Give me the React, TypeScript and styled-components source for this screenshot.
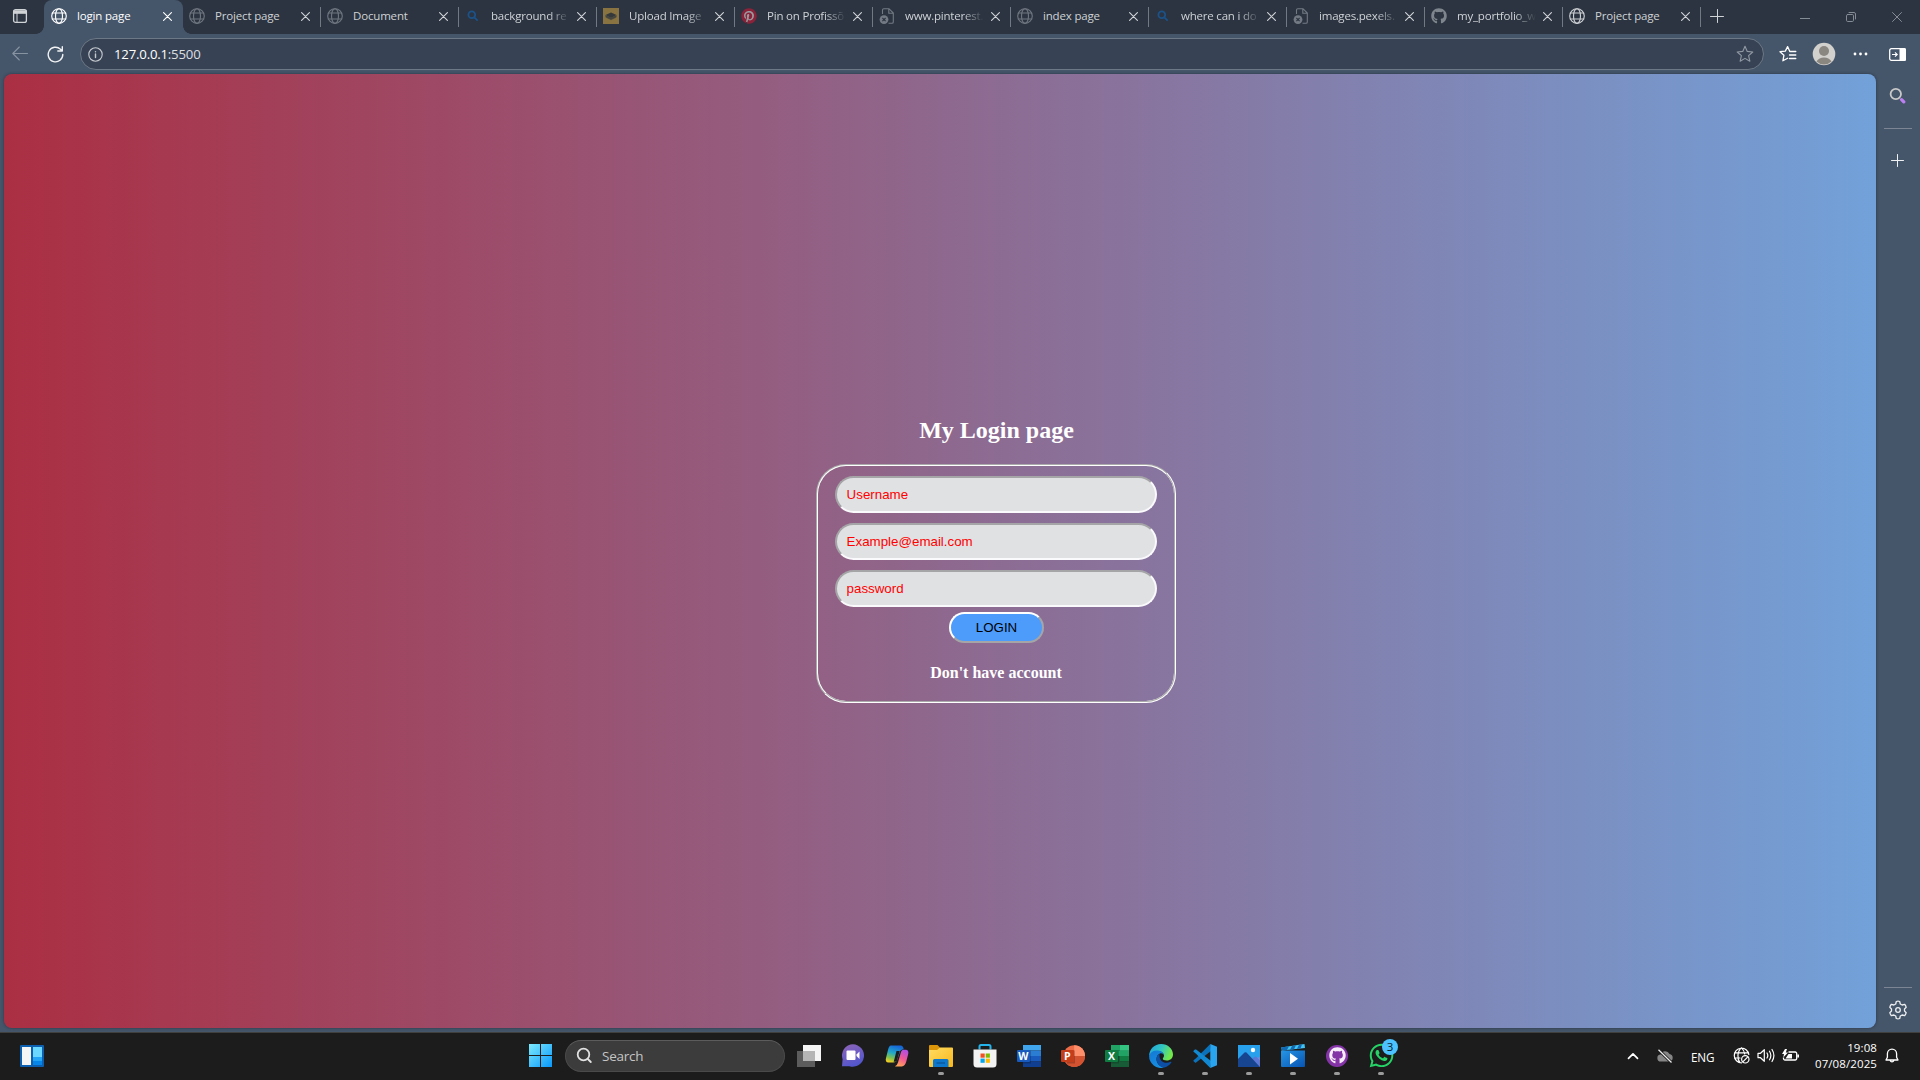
import React from "react";
import styled, { createGlobalStyle, css } from "styled-components";
import { FaGithub, FaPinterest, FaWhatsapp } from "react-icons/fa";

const GlobalStyle = createGlobalStyle`
  * { box-sizing: border-box; }
  html, body { margin: 0; padding: 0; background: #1c1c1c; overflow: hidden; }
  svg { display: block; flex: none; }
`;

const ui = `"Open Sans", "Noto Sans", sans-serif`;

const Screen = styled.div`
  width: 1920px;
  height: 1080px;
  display: grid;
  grid-template-rows: 34px 40px 958px 48px;
  background: #45556a;
  font-family: ${ui};
  overflow: hidden;
`;

/* ---------- tab strip ---------- */
const TabStrip = styled.div`
  display: flex;
  background: #2b3440;
`;
const TabActions = styled.div`
  width: 44px;
  padding: 8px 0 0 12px;
`;
const Tab = styled.div<{ $active?: boolean; $divider?: boolean }>`
  position: relative;
  width: 138px;
  height: 34px;
  display: flex;
  align-items: center;
  padding: 0 9px 2px 7px;
  color: ${(p) => (p.$active ? "#ffffff" : "#cfd2d6")};
  ${(p) =>
    p.$active &&
    css`
      width: 139px;
      margin-right: -1px;
      background: #45556a;
      border-radius: 8px 8px 0 0;
      &::before,
      &::after {
        content: "";
        position: absolute;
        bottom: 0;
        width: 8px;
        height: 8px;
      }
      &::before {
        left: -8px;
        background: radial-gradient(circle at 0 0, transparent 7.5px, #45556a 8px);
      }
      &::after {
        right: -8px;
        background: radial-gradient(circle at 100% 0, transparent 7.5px, #45556a 8px);
      }
    `}
  ${(p) =>
    p.$divider &&
    css`
      &::after {
        content: "";
        position: absolute;
        right: -1px;
        top: 7px;
        width: 1px;
        height: 20px;
        background: #717984;
      }
    `}
`;
const TabIcon = styled.span`
  width: 16px;
  height: 16px;
  display: flex;
  align-items: center;
  justify-content: center;
`;
const TabTitle = styled.span<{ $fade?: boolean }>`
  margin-left: 10px;
  width: 80px;
  margin-right: 6px;
  font-size: 11.5px;
  line-height: 16px;
  letter-spacing: -0.17px;
  white-space: nowrap;
  ${(p) =>
    p.$fade &&
    css`
      letter-spacing: -0.2px;
      mask-image: linear-gradient(to right, #000 58px, transparent 79px);
    `}
`;
const NewTab = styled.div`
  padding: 9px 0 0 10px;
`;
const WindowButtons = styled.div`
  margin-left: auto;
  display: flex;
  align-items: center;
  gap: 36px;
  padding: 0 18px 0 0;
  color: #858c95;
`;

/* ---------- toolbar ---------- */
const Toolbar = styled.div`
  display: flex;
  align-items: center;
  padding-left: 12px;
`;
const NavIcons = styled.div`
  display: flex;
  gap: 19px;
  width: 68px;
`;
const AddressBar = styled.div`
  width: 1684px;
  height: 32px;
  border: 1px solid #6c7885;
  border-radius: 16px;
  background: #374354;
  display: flex;
  align-items: center;
  padding: 0 9px 0 7px;
`;
const Address = styled.span`
  margin-left: 11px;
  flex: 1;
  color: #ffffff;
  font-size: 13.2px;
  line-height: 20px;
  letter-spacing: -0.2px;
  b {
    font-weight: 400;
    color: #dcdfe2;
  }
`;
const ToolbarRight = styled.div`
  display: flex;
  align-items: center;
  margin-left: 15px;
`;
const Gap = styled.span<{ $w: number }>`
  width: ${(p) => p.$w}px;
`;

/* ---------- content ---------- */
const Main = styled.div`
  display: grid;
  grid-template-columns: 1872px 44px;
  padding: 0 0 4px 4px;
`;
const Page = styled.main`
  height: 954px;
  border-radius: 8px;
  padding: 342px 0 0 812px;
  background: linear-gradient(to right, #ab2f43, #72a1d9);
  box-shadow: 0 0 3px rgba(20, 28, 40, 0.55);
`;
const LoginColumn = styled.div`
  width: 360px;
  font-family: "Liberation Serif", "Times New Roman", serif;
  color: #fff;
`;
const Heading = styled.h1`
  margin: 0 0 20px;
  padding-left: 1px;
  text-align: center;
  font-size: 24px;
  line-height: 28px;
  font-weight: 700;
`;
const LoginBox = styled.form`
  height: 239px;
  border: 2px groove #ffffff;
  border-radius: 30px;
  padding: 10px 17px 0;
  display: flex;
  flex-direction: column;
  align-items: center;
`;
const Field = styled.input`
  width: 322px;
  height: 37px;
  margin: 0 0 10px;
  padding: 0 9.6px;
  border: 2px solid;
  border-color: #a5a5a7 #fafafc #fafafc #a5a5a7;
  border-radius: 20px;
  background: #e0e1e3;
  font-family: "Liberation Sans", Arial, sans-serif;
  font-size: 13.333px;
  &::placeholder {
    color: #ff0000;
    opacity: 1;
  }
`;
const LoginButton = styled.button`
  width: 95px;
  height: 31px;
  margin-top: -5px;
  padding: 0 0 1px 1px;
  border: 2px solid;
  border-color: #ffffff #a5a5a7 #a5a5a7 #ffffff;
  border-radius: 20px;
  background: #4d9bfa;
  color: #000;
  font-family: "Liberation Sans", Arial, sans-serif;
  font-size: 13.333px;
`;
const SignupNote = styled.p`
  margin: 21px 0 0;
  font-size: 16px;
  line-height: 18px;
  font-weight: 700;
`;

const Sidebar = styled.aside`
  display: flex;
  flex-direction: column;
  align-items: center;
  padding: 13px 0 8px;
`;
const SideRule = styled.hr`
  width: 28px;
  height: 1px;
  margin: 0;
  border: 0;
  background: #7b8593;
`;
const Spacer = styled.div<{ $h?: number }>`
  ${(p) => (p.$h ? `height: ${p.$h}px;` : "flex: 1;")}
`;

/* ---------- taskbar ---------- */
const Taskbar = styled.footer`
  display: flex;
  align-items: center;
  padding-bottom: 2px;
  border-top: 1px solid #40413f;
  background: #1c1c1c;
  color: #fff;
`;
const Widgets = styled.div`
  width: 508px;
  padding-left: 20px;
`;
const StartButton = styled.div`
  width: 57px;
  padding-left: 21px;
`;
const SearchBox = styled.div`
  width: 220px;
  height: 32px;
  margin-right: 2px;
  border: 1px solid #4a4a4a;
  border-top-color: #5c5c5c;
  border-radius: 16px;
  background: #3c3c3c;
  display: flex;
  align-items: center;
  gap: 9px;
  padding-left: 10px;
  color: #c4c4c4;
  font-size: 13.5px;
  letter-spacing: -0.25px;
`;
const AppSlot = styled.div<{ $running?: boolean }>`
  position: relative;
  width: 44px;
  height: 45px;
  display: flex;
  align-items: center;
  justify-content: center;
  ${(p) =>
    p.$running &&
    css`
      &::after {
        content: "";
        position: absolute;
        left: 19px;
        bottom: 3px;
        width: 6px;
        height: 3px;
        border-radius: 1.5px;
        background: #9b9b9b;
      }
    `}
`;
const GithubDisc = styled.span`
  width: 22px;
  height: 22px;
  border-radius: 50%;
  background: #8534a8;
  display: flex;
  align-items: center;
  justify-content: center;
`;
const Badge = styled.span`
  position: absolute;
  left: 23px;
  top: 6px;
  width: 16px;
  height: 16px;
  border-radius: 50%;
  background: #4cc2ff;
  color: #06202c;
  font-size: 11.5px;
  line-height: 16px;
  text-align: center;
`;
const Tray = styled.div`
  margin-left: auto;
  display: flex;
  align-items: center;
  padding-right: 21px;
`;
const Language = styled.span`
  width: 24px;
  margin: 2px 18px 0 18px;
  font-size: 11.7px;
  letter-spacing: -0.2px;
`;
const Clock = styled.div`
  width: 72px;
  margin: 0 8px 0 6px;
  font-size: 11.5px;
  line-height: 16px;
  letter-spacing: 0.1px;
  text-align: right;
  white-space: nowrap;
`;

/* ---------- icons ---------- */
const line = { fill: "none", stroke: "currentColor", strokeLinecap: "round" as const, strokeLinejoin: "round" as const };

const Globe = ({ color = "#fff" }) => (
  <svg width="16" height="16" viewBox="0 0 16 16" color={color} {...line} strokeWidth="1.15">
    <circle cx="8" cy="8" r="7.3" />
    <ellipse cx="8" cy="8" rx="3.5" ry="7.3" />
    <path d="M1.3 5h13.4M1.3 11h13.4" />
  </svg>
);
const Magnifier = () => (
  <svg width="12" height="12" viewBox="0 0 12 12" fill="none" stroke="#1c5288" strokeWidth="1.8">
    <circle cx="4.8" cy="4.8" r="3.4" />
    <path d="M7.3 7.3l3.4 3.4" />
  </svg>
);
const StackTile = () => (
  <svg width="16" height="16" viewBox="0 0 16 16">
    <path fill="#897340" d="M0 0h16v16H0z" />
    <path fill="#5c5641" d="M2.500 9.500l5.500-2.700 5.500 2.700L8 12.200z" />
    <path fill="#35393c" d="M2.500 7L8 4.500 13.500 7 8 9.700z" />
    <path fill="#454640" d="M2.500 7L8 9.700 13.500 7v2L8 11.600 2.500 9z" />
  </svg>
);
const BrokenPage = () => (
  <svg width="16" height="16" viewBox="0 0 16 16">
    <path d="M3.5 6V2a1.3 1.3 0 0 1 1.3-1.3H10L14.3 5v9a1.3 1.3 0 0 1-1.3 1.3H9.5M9.8 1v4.2h4.4" fill="none" stroke="#737a84" strokeWidth="1.1" />
    <circle cx="5" cy="11.6" r="4.4" fill="#737a84" />
    <path d="M3.4 10l3.2 3.2M6.6 10l-3.2 3.2" stroke="#2b3440" strokeWidth="1.1" />
  </svg>
);
const PinterestMark = styled(FaPinterest)`
  color: #8a2239;
  background: radial-gradient(circle, #9a9a9e 6.5px, transparent 7px);
`;
const Close = () => (
  <svg width="9" height="9" viewBox="0 0 9 9" {...line} strokeWidth="1.15">
    <path d="M.6.6l7.8 7.8M8.4.6L.6 8.4" />
  </svg>
);
const star = "M8 1.2l2 4.5 4.9.5-3.7 3.3 1.1 4.9L8 11.9l-4.3 2.5 1.1-4.9L1.1 6.2 6 5.7z";

const iconSet: Record<string, React.ReactNode> = {
  globe: <Globe />,
  dimGlobe: <Globe color="#6f7680" />,
  lightGlobe: <Globe color="#cdd0d4" />,
  search: <Magnifier />,
  stack: <StackTile />,
  pin: <PinterestMark size={16} />,
  page: <BrokenPage />,
  github: <FaGithub size={16} color="#7f858c" />,
};

const tabs = [
  { title: "login page", icon: "globe" },
  { title: "Project page", icon: "dimGlobe" },
  { title: "Document", icon: "dimGlobe" },
  { title: "background re", icon: "search", fade: true },
  { title: "Upload Image", icon: "stack", fade: true },
  { title: "Pin on Profissõ", icon: "pin", fade: true },
  { title: "www.pinterest.", icon: "page", fade: true },
  { title: "index page", icon: "dimGlobe" },
  { title: "where can i do", icon: "search", fade: true },
  { title: "images.pexels.", icon: "page", fade: true },
  { title: "my_portfolio_w", icon: "github", fade: true },
  { title: "Project page", icon: "lightGlobe" },
];

const OfficeIcon = ({ letter, tones, badge, round }: { letter: string; tones: string[]; badge: string; round?: boolean }) => (
  <svg width="24" height="22" viewBox="0 0 24 22">
    {round ? (
      <>
        <circle cx="13.2" cy="11" r="10.8" fill={tones[0]} />
        <path d="M13.2.2A10.8 10.8 0 0 1 24 11H13.2z" fill={tones[1]} />
        <path d="M2.4 11H24a10.8 10.8 0 0 1-21.6 0z" fill={tones[2]} />
      </>
    ) : (
      tones.map((t, i) => <rect key={i} x="6" y={i * 5.5} width="18" height="5.5" fill={t} />)
    )}
    {letter === "X" && <path d="M15 0h9v5.5h-9z" fill="#33c481" />}
    {letter === "X" && <path d="M6 11h9v5.5H6z" fill="#185c37" />}
    <rect x="6" y="5.5" width="8" height="13" fill="#000" opacity=".2" />
    <rect x="0" y="5" width="13" height="12" rx="1" fill={badge} />
    <text x="6.4" y="14.8" textAnchor="middle" fontSize="10.5" fontWeight="700" fill="#fff" fontFamily="Open Sans, sans-serif">
      {letter}
    </text>
  </svg>
);

const Folder = () => (
  <svg width="24" height="22" viewBox="0 0 24 22">
    <defs>
      <linearGradient id="fold" x2="1" y2="1"><stop stopColor="#ffdc62" /><stop offset="1" stopColor="#f8b71c" /></linearGradient>
    </defs>
    <path d="M0 1a1 1 0 0 1 1-1h7.5L11 2.5V6H0z" fill="#dc9608" />
    <path d="M0 5h8l3-2.5h12a1 1 0 0 1 1 1V21a1 1 0 0 1-1 1H1a1 1 0 0 1-1-1z" fill="url(#fold)" />
    <path d="M4 22v-6.5a1.5 1.5 0 0 1 1.5-1.5h12.500a1.5 1.5 0 0 1 1.5 1.5V22z" fill="#0d77cc" />
    <path d="M7.5 18h8.5" stroke="#0b5293" strokeWidth="1.2" />
  </svg>
);
const Copilot = () => (
  <svg width="24" height="22" viewBox="0 0 24 22">
    <defs>
      <linearGradient id="cpA" x1=".6" x2=".3" y2="1"><stop stopColor="#1764d8" /><stop offset=".45" stopColor="#21a9c8" /><stop offset=".75" stopColor="#7cc253" /><stop offset="1" stopColor="#f3cf23" /></linearGradient>
      <linearGradient id="cpB" x1=".7" x2=".3" y2="1"><stop stopColor="#b04ee4" /><stop offset=".5" stopColor="#ef5795" /><stop offset="1" stopColor="#ffa556" /></linearGradient>
    </defs>
    <path d="M10 21.200q2.200-.7 3-3.700L16 7c.6-1.700 1.500-2.300 3-2.300h1.500c2.600 0 3.300 2 2.700 4.300l-2 7.800c-.7 2.600-2 4.600-4.500 4.600h-6z" fill="url(#cpB)" />
    <path d="M6 .6h9.500c2 0 2.700 1.200 3.200 3.600-2 0-3.200.8-3.900 2.800L12.300 14.500c-.7 2.200-2 3-4.300 3H3.500c-2.500 0-3.200-2-2.500-4.500l2-8C3.600 2.500 4.500.6 6 .6z" fill="url(#cpA)" />
    <path d="M11.500 6h3.200l-2.600 9.200q-.6 1.600-1.500 1.600H8.700z" fill="#1c1c1c" />
  </svg>
);
const Edge = () => (
  <svg width="24" height="24" viewBox="0 0 24 24">
    <defs>
      <linearGradient id="edA" x2="1" y2=".35"><stop stopColor="#1fa0e2" /><stop offset=".55" stopColor="#32c6c2" /><stop offset="1" stopColor="#72e84b" /></linearGradient>
      <linearGradient id="edB" x2=".6" y2="1"><stop stopColor="#1478d4" /><stop offset="1" stopColor="#168fe0" /></linearGradient>
    </defs>
    <path d="M.1 11.5C.5 5 5.5 0 12 0c7 0 12 5 12 10.5 0 3.8-2.800 6-6.200 6-2.600 0-4-.8-4-1.700 0-.8 1.200-1.200 1.200-3.200 0-2.300-2-4.200-4.500-4.200C5.500 7.400 2 9 .1 11.5z" fill="url(#edA)" />
    <path d="M.1 11.5C1.500 8 5 6 9 6.500c3.500.3 6 2.600 6 5.200C14.500 9.500 12.500 9 11 9.500c-2 .8-3.500 3-3.500 5.500 0 4.500 3.500 8 8 8.500A12 12 0 0 1 .1 11.5z" fill="url(#edB)" />
    <path d="M10.500 9.700c-2 .8-3 3-3 5.300 0 4.500 3.500 8.300 8 8.500 3-.8 5.300-2.700 6.800-5 .4-.6-.1-1-.7-.7-5 2.500-12 .3-11.100-8.100z" fill="#0c4fa5" />
  </svg>
);
const VsCode = () => (
  <svg width="24" height="24" viewBox="0 0 24 24">
    <path d="M17.300 0L3 14.200.6 16.300a.7.7 0 0 0 0 1l1.300 1.100c.4.3.8.3 1.200 0L18 7z" fill="#0b71b9" />
    <path d="M17.300 24L3 9.800.6 7.700a.7.7 0 0 1 0-1l1.300-1.100c.4-.3.8-.3 1.200 0L18 17z" fill="#1288d1" />
    <path d="M17.300 0L24 2.800v18.400L17.300 24z" fill="#29a5f0" />
  </svg>
);
const Photos = () => (
  <svg width="22" height="22" viewBox="0 0 22 22">
    <path d="M0 0h22v22H0z" fill="#29a0ec" />
    <path d="M22 12v10H11l3-8z" fill="#6d8be4" />
    <path d="M13 15l3.500-3.200q.8-.6 1.600 0L22 15.500V22h-4z" fill="#5c78d4" />
    <path d="M0 14L6.500 7.600q1-.8 2 0L22 22H0z" fill="#17458f" />
    <circle cx="15" cy="5" r="2.200" fill="#fff" />
  </svg>
);
const MovieClip = () => (
  <svg width="24" height="23" viewBox="0 0 24 23">
    <defs><linearGradient id="mv" x2="1" y2="1"><stop stopColor="#2696e5" /><stop offset="1" stopColor="#0754b2" /></linearGradient></defs>
    <path d="M0 3.400L23.500 0 24 4 1 6.500z" fill="#41c4f3" />
    <path d="M0 3.400l8-1.100-2 3.700-5 .5zM11 1.900l4-.6-2 4-4 .4zM18 .8l3-.4-1.500 4-3.500.3z" fill="#126ab5" />
    <path d="M0 6.500h24V22a1 1 0 0 1-1 1H1a1 1 0 0 1-1-1z" fill="url(#mv)" />
    <path d="M9 9v11.500l8-5.800z" fill="#fff" />
  </svg>
);
const StoreIcon = () => (
  <svg width="24" height="24" viewBox="0 0 24 24">
    <path d="M6.500 5.500v-3a1.500 1.500 0 0 1 1.500-1.500h8a1.500 1.500 0 0 1 1.500 1.500v3" fill="none" stroke="#24b4eb" strokeWidth="2" />
    <path d="M.5 5.500h23V20a3.500 3.500 0 0 1-3.500 3.500H4A3.500 3.500 0 0 1 .5 20z" fill="#f3f3f3" />
    <path d="M7.500 9.500h4.200v4.200H7.500z" fill="#f25022" /><path d="M12.700 9.500h4.200v4.200h-4.200z" fill="#7fba00" />
    <path d="M7.500 14.600h4.200v4.200H7.500z" fill="#00a4ef" /><path d="M12.700 14.600h4.200v4.200h-4.200z" fill="#ffb900" />
  </svg>
);

export default function App() {
  return (
    <>
      <GlobalStyle />
      <Screen>
        <TabStrip>
          <TabActions>
            <svg width="16" height="16" viewBox="0 0 16 16" color="#d0d3d6" {...line} strokeWidth="1.3">
              <rect x="1.600" y="1.600" width="12.800" height="12.800" rx="2" />
              <path d="M2 3h12v2.200H2z" fill="currentColor" />
              <path d="M5 5v9" strokeWidth="1" />
            </svg>
          </TabActions>
          {tabs.map((t, i) => (
            <Tab key={i} $active={i === 0} $divider={i > 0}>
              <TabIcon>{iconSet[t.icon]}</TabIcon>
              <TabTitle $fade={t.fade}>{t.title}</TabTitle>
              <Close />
            </Tab>
          ))}
          <NewTab>
            <svg width="14" height="14" viewBox="0 0 14 14" color="#d0d3d6" {...line} strokeWidth="1">
              <path d="M7.500 .5v13M.5 7.500h13" />
            </svg>
          </NewTab>
          <WindowButtons>
            <svg width="10" height="10" viewBox="0 0 10 10" {...line}><path d="M0 6.500h10" /></svg>
            <svg width="10" height="10" viewBox="0 0 10 10" {...line}>
              <rect x=".5" y="2.500" width="7" height="7" rx="1.200" />
              <path d="M3 .5h5A1.500 1.500 0 0 1 9.500 2v5" />
            </svg>
            <svg width="10" height="10" viewBox="0 0 10 10" {...line}><path d="M.5.5l9 9M9.500.5l-9 9" /></svg>
          </WindowButtons>
        </TabStrip>

        <Toolbar>
          <NavIcons>
            <svg width="16" height="16" viewBox="0 0 16 16" color="#8793a1" {...line} strokeWidth="1.100">
              <path d="M15.500 7.500H.8M7.300 1L.8 7.500 7.300 14" />
            </svg>
            <svg width="17" height="17" viewBox="0 0 17 17" color="#f1f2f3" {...line} strokeWidth="1.400">
              <path d="M15.800 8.500a7.300 7.300 0 1 1-2.300-5.300l1.800 1.800M15.300 .8V5h-4.500" />
            </svg>
          </NavIcons>
          <AddressBar>
            <svg width="15" height="15" viewBox="0 0 15 15" color="#c6cacf" {...line} strokeWidth="1.100">
              <circle cx="7.500" cy="7.500" r="6.700" />
              <path d="M7.500 7v3.500M7.500 4.600v.1" strokeWidth="1.400" />
            </svg>
            <Address>127.0.0.1<b>:5500</b></Address>
            <svg width="18" height="18" viewBox="0 0 16 16" color="#9098a3" {...line}><path d={star} /></svg>
          </AddressBar>
          <ToolbarRight>
            <svg width="18" height="18" viewBox="0 0 18 18" color="#fff" {...line} strokeWidth="1.300">
              <path d="M10.800 6.500L8.600 1.600 6.300 6.100 1 6.700l3.900 3.600-1 5.500 4.700-2.600M11.300 6.500h5.500M10.500 10h6.300M10.500 13.500h6.300" />
            </svg>
            <Gap $w={15} />
            <svg width="24" height="24" viewBox="0 0 24 24">
              <circle cx="12" cy="12" r="11.300" fill="#d3d1cd" />
              <circle cx="12" cy="9" r="5" fill="#8a8680" />
              <path d="M4.500 19.500Q7 15.500 12 15.500t7.500 4A11 11 0 0 1 4.500 19.500z" fill="#8a8680" />
            </svg>
            <Gap $w={17} />
            <svg width="15" height="4" viewBox="0 0 15 4" fill="#fff">
              <circle cx="2" cy="2" r="1.400" /><circle cx="7.500" cy="2" r="1.400" /><circle cx="13" cy="2" r="1.400" />
            </svg>
            <Gap $w={21} />
            <svg width="17" height="13" viewBox="0 0 17 13">
              <rect x=".7" y=".7" width="15.600" height="11.600" rx="1.600" fill="none" stroke="#fff" strokeWidth="1.300" />
              <path d="M10.500 0H15.500A1.500 1.500 0 0 1 17 1.500v10A1.500 1.500 0 0 1 15.500 13h-5z" fill="#fff" />
              <path d="M3 6.500h5M6 4.300l2.200 2.200L6 8.700" fill="none" stroke="#fff" strokeWidth="1.200" />
            </svg>
          </ToolbarRight>
        </Toolbar>

        <Main>
          <Page>
            <LoginColumn>
              <Heading>My Login page</Heading>
              <LoginBox>
                <Field type="text" placeholder="Username" />
                <Field type="email" placeholder="Example@email.com" />
                <Field type="password" placeholder="password" />
                <LoginButton type="button">LOGIN</LoginButton>
                <SignupNote>Don't have account</SignupNote>
              </LoginBox>
            </LoginColumn>
          </Page>
          <Sidebar>
            <svg width="18" height="17" viewBox="0 0 18 17" fill="none">
              <circle cx="6.800" cy="7" r="5.200" stroke="#c9c9c9" strokeWidth="1.800" />
              <path d="M12.600 12.600l2.200 2.300" stroke="#bd80f2" strokeWidth="3.200" strokeLinecap="round" />
            </svg>
            <Spacer $h={24} />
            <SideRule />
            <Spacer $h={25} />
            <svg width="14" height="13" viewBox="0 0 14 13" color="#f0f1f2" {...line}><path d="M6.500 .5v12M.5 6.500h12" /></svg>
            <Spacer />
            <SideRule />
            <Spacer $h={12} />
            <svg width="18" height="20" viewBox="0 0 18 20" color="#eceef0" {...line} strokeWidth="1.300">
              <path d="M7.300 1.500Q9 .8 10.700 1.500L11.300 4l1.800 1 2.500-.7q1.200 1.300 1.600 3L15.500 9v2l1.700 1.700q-.4 1.700-1.600 3L13.100 15l-1.800 1-.6 2.500q-1.700.7-3.400 0L6.700 16l-1.800-1-2.500.7q-1.200-1.300-1.600-3L2.500 11V9L.8 7.300q.4-1.700 1.600-3L4.900 5l1.800-1z" />
              <circle cx="9" cy="10" r="2.300" />
            </svg>
          </Sidebar>
        </Main>

        <Taskbar>
          <Widgets>
            <svg width="24" height="22" viewBox="0 0 24 22">
              <rect width="24" height="22" rx="1" fill="#0d60b0" />
              <path d="M2 2h9v18H2z" fill="#f5f5f5" />
              <path d="M13 2h9v10h-9z" fill="#6bd8ff" /><path d="M13 12h9v4h-9z" fill="#23a6f5" /><path d="M13 16h9v4h-9z" fill="#0786ea" />
            </svg>
          </Widgets>
          <StartButton>
            <svg width="23" height="23" viewBox="0 0 23 23">
              <defs><linearGradient id="win" x2="1" y2="1"><stop stopColor="#7deafe" /><stop offset="1" stopColor="#0897fa" /></linearGradient></defs>
              <path d="M0 0h11v11H0zM12 0h11v11H12zM0 12h11v11H0zM12 12h11v11H12z" fill="url(#win)" />
            </svg>
          </StartButton>
          <SearchBox>
            <svg width="17" height="17" viewBox="0 0 17 17" color="#e2e2e2" {...line} strokeWidth="1.800">
              <circle cx="7.500" cy="7.500" r="5.800" /><path d="M11.800 12l3 3" />
            </svg>
            Search
          </SearchBox>
          <AppSlot>
            <svg width="24" height="22" viewBox="0 0 24 22">
              <path d="M6 0h18v16H6z" fill="#f5f5f5" />
              <path d="M0 6h18v16H0z" fill="#5c5c5c" />
              <path d="M6 6h12v10H6z" fill="#b5b5b5" />
            </svg>
          </AppSlot>
          <AppSlot>
            <svg width="24" height="23" viewBox="0 0 24 23">
              <defs><linearGradient id="chat" x1=".2" x2=".6" y2="1"><stop stopColor="#8b63b8" /><stop offset="1" stopColor="#4f55cf" /></linearGradient></defs>
              <path d="M12 .3a11.200 11.200 0 1 1-3.500 21.900H1l.6-7A11.200 11.200 0 0 1 12 .3z" fill="url(#chat)" />
              <rect x="5.500" y="6.500" width="9" height="9.500" rx="1" fill="#fff" /><path d="M15.500 10.500l3-3v7.500l-3-3z" fill="#fff" />
            </svg>
          </AppSlot>
          <AppSlot><Copilot /></AppSlot>
          <AppSlot $running><Folder /></AppSlot>
          <AppSlot><StoreIcon /></AppSlot>
          <AppSlot><OfficeIcon letter="W" tones={["#41a5ee", "#2b7cd3", "#185abd", "#103f91"]} badge="#185abd" /></AppSlot>
          <AppSlot><OfficeIcon letter="P" tones={["#ed6c47", "#ff8f6b", "#d35230"]} badge="#c43e1c" round /></AppSlot>
          <AppSlot><OfficeIcon letter="X" tones={["#21a366", "#21a366", "#107c41", "#185c37"]} badge="#107c41" /></AppSlot>
          <AppSlot $running><Edge /></AppSlot>
          <AppSlot $running><VsCode /></AppSlot>
          <AppSlot $running><Photos /></AppSlot>
          <AppSlot $running><MovieClip /></AppSlot>
          <AppSlot $running><GithubDisc><FaGithub size={17} color="#f5eef8" /></GithubDisc></AppSlot>
          <AppSlot $running>
            <FaWhatsapp size={27} color="#25d366" />
            <Badge>3</Badge>
          </AppSlot>
          <Tray>
            <svg width="12" height="8" viewBox="0 0 12 8" {...line} strokeWidth="1.700"><path d="M1.500 6.300L6 1.800l4.500 4.500" /></svg>
            <Gap $w={18} />
            <svg width="16" height="14" viewBox="0 0 16 14">
              <path d="M4 12.500a3.500 3.500 0 0 1-.3-7A4.800 4.800 0 0 1 12.500 5a3.800 3.800 0 0 1 0 7.500z" fill="#858585" />
              <path d="M1.500 .8l13 12.700" stroke="#1c1c1c" strokeWidth="3" /><path d="M1.500 .8l13 12.700" stroke="#f0f0f0" strokeWidth="1.200" />
            </svg>
            <Language>ENG</Language>
            <svg width="17" height="17" viewBox="0 0 17 17" {...line} strokeWidth="1.200">
              <path d="M15.800 7.500A7.300 7.300 0 1 0 8.500 15.800M1.500 5.800h13.800M1.500 11h5.500M8.500.9C4 4.500 4 12 7 15.600M8.500.9C10.500 2.700 11.500 4.800 11.700 7" />
              <circle cx="12.300" cy="12.300" r="3.700" /><path d="M9.800 14.800l5-5" />
            </svg>
            <Gap $w={7} />
            <svg width="18" height="15" viewBox="0 0 18 15" {...line} strokeWidth="1.200">
              <path d="M1 5.300h2.500L7.300 1.700v11.600L3.500 9.700H1zM10 5q1.600 2.500 0 5M12.500 3.200q2.700 4.300 0 8.600M15 1.500q3.800 6 0 12" />
            </svg>
            <Gap $w={7} />
            <svg width="17" height="14" viewBox="0 0 17 14">
              <path d="M6.500 3h6.700a1.500 1.500 0 0 1 1.500 1.500v5a1.500 1.500 0 0 1-1.500 1.500H3a1.500 1.500 0 0 1-1.500-1.500V8.500" fill="none" stroke="#fff" strokeWidth="1.300" />
              <path d="M6.500 5H10v4.500H3.500zM15.300 5.500H17v3h-1.700zM3 0L0 5h2L1.300 8.500 6 3.500H3.800L5 0z" fill="#fff" />
            </svg>
            <Clock>
              19:08
              <br />
              07/08/2025
            </Clock>
            <svg width="14" height="16" viewBox="0 0 14 16" {...line} strokeWidth="1.300">
              <path d="M1 12l1.400-2.800V5.800a4.600 4.600 0 0 1 9.200 0v3.400L13 12zM5.200 12.500a1.900 1.900 0 0 0 3.600 0" />
            </svg>
          </Tray>
        </Taskbar>
      </Screen>
    </>
  );
}
